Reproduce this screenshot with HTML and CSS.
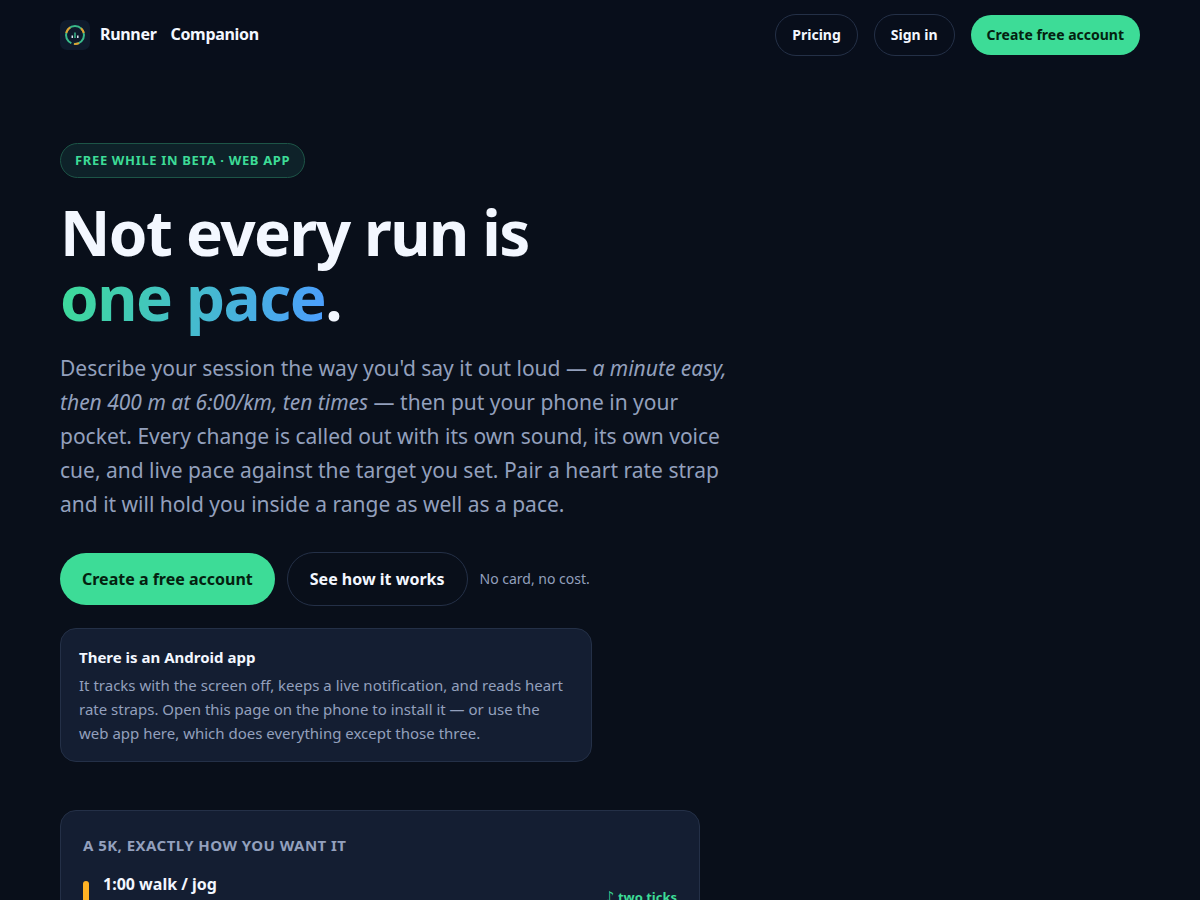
FILE: index.html
```html
<!DOCTYPE html>
<html lang="en">
<head>
<meta charset="utf-8">
<meta name="viewport" content="width=device-width, initial-scale=1">
<title>Runner Companion</title>
<link rel="stylesheet" href="styles.css">
</head>
<body>
<header class="site-header">
  <div class="wrap header-row">
    <a class="brand" href="#">
      <svg class="brand-mark" viewBox="0 0 30 30" aria-hidden="true">
        <rect width="30" height="30" rx="7" fill="#0f1a2c"/>
        <g fill="none" stroke-width="2">
          <circle cx="15" cy="15" r="9" stroke="#39b98a"/>
          <path d="M6.2 13A9 9 0 0 1 10.2 7.4" stroke="#e0a030"/>
          <path d="M21 8.3A9 9 0 0 1 23.8 13" stroke="#e0a030"/>
          <path d="M19 23.1A9 9 0 0 1 14.2 24" stroke="#e0a030"/>
          <path d="M13.8 24A9 9 0 0 1 11.4 23.2" stroke="#0f1a2c" stroke-width="3"/>
        </g>
        <path d="M12.3 15.5V18M17.8 15.5V18" stroke="#dfe8f5" stroke-width="1.5"/>
        <path d="M15 12.5V18" stroke="#39b98a" stroke-width="1.5"/>
      </svg>
      <span class="brand-name"><span>Runner</span><span>Companion</span></span>
    </a>
    <nav class="nav" aria-label="Main">
      <a class="btn btn-small btn-ghost" href="#pricing">Pricing</a>
      <a class="btn btn-small btn-ghost" href="#signin">Sign in</a>
      <a class="btn btn-small btn-primary" href="#signup">Create free account</a>
    </nav>
  </div>
</header>
<main class="wrap hero">
  <p class="badge">Free while in beta · Web app</p>
  <h1 class="title">Not every run is<br><span class="title-accent">one pace</span>.</h1>
  <p class="lead">Describe your session the way you'd say it out loud — <em>a minute easy, then 400 m at 6:00/km, ten times</em> — then put your phone in your pocket. Every change is called out with its own sound, its own voice cue, and live pace against the target you set. Pair a heart rate strap and it will hold you inside a range as well as a pace.</p>
  <div class="actions">
    <a class="btn btn-primary" href="#signup">Create a free account</a>
    <a class="btn btn-ghost" href="#how">See how it works</a>
    <span class="note">No card, no cost.</span>
  </div>
  <section class="app-card">
    <h2 class="app-title">There is an Android app</h2>
    <p class="app-text">It tracks with the screen off, keeps a live notification, and reads heart rate straps. Open this page on the phone to install it — or use the web app here, which does everything except those three.</p>
  </section>
  <section class="plan">
    <h2 class="plan-title">A 5K, exactly how you want it</h2>
    <div class="step">
      <span class="step-bar"></span>
      <h3 class="step-name">1:00 walk / jog</h3>
      <span class="step-cue"><span class="step-note">♪</span> two ticks</span>
    </div>
  </section>
</main>
</body>
</html>
```
FILE: styles.css
```css
:root {
  --bg: #090f1a;
  --panel: #141e32;
  --line: #243047;
  --text: #f3f7ff;
  --muted: #93a0bd;
  --green: #3ddc97;
}

* { box-sizing: border-box; }

body {
  margin: 0;
  background: var(--bg);
  color: var(--text);
  font-family: "Noto Sans", sans-serif;
  font-size: 16px;
  line-height: 1.6;
}

h1, h2, h3, p { margin: 0; }
a { color: inherit; text-decoration: none; }

.wrap {
  max-width: 1128px;
  margin: 0 auto;
  padding: 0 24px;
}

.site-header { background: #080e1b; }

.header-row {
  display: flex;
  align-items: center;
  justify-content: space-between;
  padding-top: 14px;
  padding-bottom: 14px;
}

.brand {
  display: flex;
  align-items: center;
  gap: 10px;
  font-weight: 700;
  letter-spacing: -0.02em;
}

.brand-mark { width: 30px; height: 30px; }
.brand-name { display: flex; gap: 14px; }
.nav { display: flex; align-items: center; gap: 16px; }

.btn {
  display: inline-block;
  padding: 13px 22px;
  border-radius: 999px;
  font-weight: 700;
  line-height: 26px;
  white-space: nowrap;
}

.btn-small { padding: 9px 16px; font-size: 14px; line-height: 22px; }
.btn-primary { background: var(--green); color: #04210f; }
.btn-ghost { border: 1px solid var(--line); }

.hero { padding-top: 73px; padding-bottom: 48px; }

.badge {
  width: fit-content;
  padding: 6px 14px;
  border: 1px solid #1d5547;
  border-radius: 999px;
  background: #0e2229;
  color: var(--green);
  font-size: 13px;
  font-weight: 700;
  letter-spacing: 0.05em;
  text-transform: uppercase;
}

.title {
  margin-top: 22px;
  font-size: 62px;
  font-weight: 700;
  line-height: 65px;
  letter-spacing: -0.025em;
}

.title-accent {
  background: linear-gradient(100deg, var(--green), #4c9dff);
  -webkit-background-clip: text;
  background-clip: text;
  color: transparent;
}

.lead {
  max-width: 680px;
  margin-top: 21px;
  color: var(--muted);
  font-size: 21px;
  line-height: 34px;
}

.actions {
  display: flex;
  flex-wrap: wrap;
  align-items: center;
  gap: 12px;
  margin-top: 31px;
}

.note { color: var(--muted); font-size: 14px; }

.app-card {
  max-width: 532px;
  margin-top: 22px;
  padding: 16px 18px;
  border: 1px solid var(--line);
  border-radius: 16px;
  background: var(--panel);
  font-size: 15px;
}

.app-title { margin-bottom: 4px; font-size: 15px; font-weight: 700; }
.app-text { color: var(--muted); }

.plan {
  max-width: 640px;
  margin-top: 48px;
  padding: 22px;
  border: 1px solid var(--line);
  border-radius: 16px;
  background: var(--panel);
}

.plan-title {
  color: var(--muted);
  font-size: 15px;
  font-weight: 700;
  letter-spacing: 0.03em;
  text-transform: uppercase;
}

.step {
  display: flex;
  align-items: center;
  gap: 14px;
  height: 50px;
  margin-top: 16px;
}

.step-bar { width: 6px; height: 34px; border-radius: 3px; background: #ffb224; }
.step-name { align-self: flex-start; flex: 1; font-size: 16px; font-weight: 700; line-height: 22px; }
.step-cue { color: var(--green); font-size: 13px; font-weight: 700; }
.step-note { font-family: "DejaVu Sans", sans-serif; font-size: 15px; line-height: 1; }
```
